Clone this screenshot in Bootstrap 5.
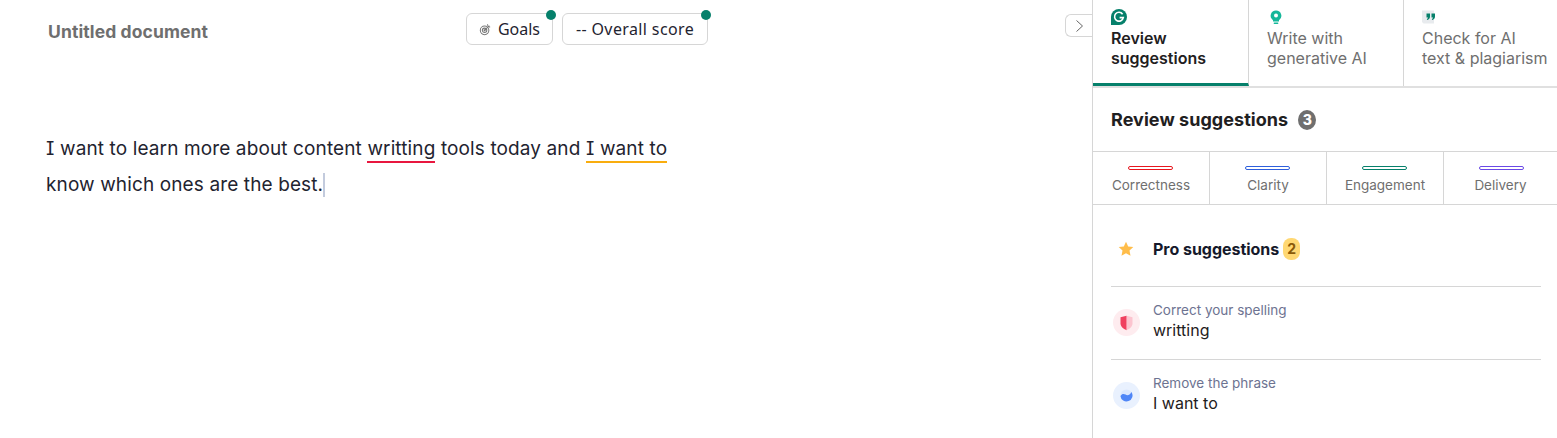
<!DOCTYPE html>
<html lang="en">
<head>
  <meta charset="UTF-8" />
  <title>Untitled document</title>
  <link href="https://cdn.jsdelivr.net/npm/bootstrap@5.3.0/dist/css/bootstrap.min.css" rel="stylesheet"/>
  <style>
    html, body { height: 438px; overflow: hidden; }
    body { font-family: Inter, "Liberation Sans", sans-serif; color: #1f2430; background: #fff; }
    .app-shell { height: 438px; }
    .editor-pane { width: 1092px; position: relative; }
    .editor-top { padding: 13px 0 0 48px; height: 131px; }
    .doc-title { width: 418px; padding-top: 8px; font-size: 17.5px; font-weight: 700; line-height: 21px; color: #6f6f6f; letter-spacing: .1px; }
    .top-pill { position: relative; height: 32px; border: 1px solid #d6d6d6; border-radius: 6px; font-family: "Noto Sans", sans-serif; font-size: 16px; color: #1f2430; background: #fff; }
    .pill-goals { width: 87px; margin-right: 9px; gap: 7px; }
    .pill-score { width: 146px; letter-spacing: .38px; }
    .pill-dot { position: absolute; top: -4px; right: -4px; width: 10px; height: 10px; border-radius: 50%; background: #06806b; }
    .collapse-tab { position: absolute; top: 14px; right: 0; width: 27px; height: 23px; border: 1px solid #d6d6d6; border-right: 0; border-radius: 6px 0 0 6px; background: #fff; }
    .doc-text { padding-left: 46px; width: 690px; font-size: 19px; line-height: 36px; letter-spacing: .12px; color: #1f2430; font-feature-settings: "cv08"; }
    .mark-red { border-bottom: 2px solid #e8173f; padding-bottom: 1px; }
    .mark-yellow { border-bottom: 2px solid #f9ad0e; padding-bottom: 1px; }
    .caret-line { display: inline-block; width: 2px; height: 24px; background: #c3cbdd; vertical-align: -6px; }
    .side-pane { width: 465px; border-left: 1px solid #d6d6d6; }
    .side-tabs { height: 88px; border-bottom: 2px solid #e0e0e0; }
    .side-tab { width: 155px; flex-shrink: 0; padding: 9px 0 0 18px; font-size: 16px; line-height: 20px; color: #6f6f6f; border-right: 1px solid #d6d6d6; }
    .side-tab:first-child { width: 156px; }
    .side-tab:last-child { border-right: 0; width: auto; flex: 1 1 0; white-space: nowrap; overflow: hidden; }
    .side-tab.is-on { color: #1f2021; font-weight: 600; border-bottom: 3px solid #06806b; }
    .tab-ico { display: block; height: 16px; margin-bottom: 3px; }
    .ico-bulb { margin-left: 3px; }
    .side-head { height: 63px; padding-left: 18px; font-size: 18px; font-weight: 700; letter-spacing: .05px; color: #1f2021; }
    .count-grey { width: 18px; height: 20px; margin-left: 10px; border-radius: 50%; background: #6f6f6f; color: #fff; font-size: 14px; font-weight: 800; }
    .cat-row { height: 54px; border-top: 1px solid #d6d6d6; border-bottom: 1px solid #d6d6d6; }
    .cat-item { width: 117px; padding-top: 14px; font-size: 13.5px; line-height: 18px; color: #6f6f6f; border-right: 1px solid #d6d6d6; text-align: center; }
    .cat-item:last-child { border-right: 0; flex: 1 1 0; }
    .cat-bar { display: block; width: 45px; height: 4px; margin: 0 0 6px 35px; border: 1px solid; border-radius: 2px; }
    .sug-list { padding: 0 16px 0 18px; }
    .sug-pro { height: 82px; padding-top: 6px; font-size: 16px; font-weight: 700; letter-spacing: -.03px; color: #15192b; border-bottom: 1px solid #d6d6d6; }
    .sug-slot { width: 42px; }
    .ico-star { margin-left: 7px; }
    .count-yellow { width: 17px; height: 22px; margin-left: 4px; border-radius: 8px; background: #ffd873; color: #8a5a08; font-size: 14px; font-weight: 700; }
    .sug-row { height: 73px; padding-top: 13px; border-bottom: 1px solid #d6d6d6; }
    .sug-row:last-child { border-bottom: 0; }
    .sug-badge { width: 27px; height: 27px; border-radius: 50%; margin: 9px 13px 0 2px; }
    .sug-hint { font-size: 13.5px; line-height: 20px; color: #6d7391; }
    .sug-word { font-size: 16px; line-height: 20px; color: #1f2021; }
  </style>
</head>
<body>
  <div class="app-shell d-flex">
    <div class="editor-pane">
      <div class="editor-top d-flex align-items-start">
        <div class="doc-title">Untitled document</div>
        <div class="top-pill pill-goals d-flex align-items-center justify-content-center">
          <svg width="12" height="13" viewBox="0 0 14 14" fill="none" stroke="#777" stroke-width="1.2"><circle cx="6.500" cy="8" r="5"/><circle cx="6.500" cy="8" r="2.600"/><circle cx="6.500" cy="8" r=".6"/><path d="M6.500 8 12 2.500M10 2.500V1M11.500 4H13"/></svg>
          <span>Goals</span>
          <span class="pill-dot"></span>
        </div>
        <div class="top-pill pill-score d-flex align-items-center justify-content-center">
          <span>-- Overall score</span>
          <span class="pill-dot"></span>
        </div>
      </div>
      <div class="collapse-tab d-flex align-items-center justify-content-center">
        <svg width="9" height="14" viewBox="0 0 9 14" fill="none" stroke="#666" stroke-width="1"><path d="M1.500 1.500 7.500 7l-6 5.500"/></svg>
      </div>
      <div class="doc-text">I want to learn more about content <span class="mark-red">writting</span> tools today and <span class="mark-yellow">I want to</span> know which ones are the best.<span class="caret-line"></span></div>
    </div>

    <div class="side-pane">
      <div class="side-tabs d-flex">
        <div class="side-tab is-on">
          <svg class="tab-ico" width="16" height="16" viewBox="0 0 16 16"><path d="M8 0a8 8 0 0 1 0 16H0V8a8 8 0 0 1 8-8z" fill="#06806b"/><path d="M11.600 5.200A4.400 4.400 0 1 0 12.300 8.600H8.600" fill="none" stroke="#fff" stroke-width="1.600"/></svg>
          Review<br>suggestions
        </div>
        <div class="side-tab">
          <svg class="tab-ico ico-bulb" width="12" height="16" viewBox="0 0 12 16"><path d="M6 1.500a5.300 5.300 0 0 1 3 9.700V12.500H3v-1.300A5.300 5.300 0 0 1 6 1.500z" fill="#15b79a"/><rect x="3.600" y="13.600" width="4.800" height="1.500" rx=".75" fill="#15b79a"/><circle cx="6" cy="6.500" r="2" fill="#fff"/></svg>
          Write with<br>generative AI
        </div>
        <div class="side-tab">
          <svg class="tab-ico" width="15" height="16" viewBox="0 0 15 16"><path d="M0 1.500h12v13H1.500L0 13z" fill="#e8ebee"/><path d="M4.500 4.500h3.500v3c0 1.800-1 3-2.800 3.400l-.4-.9c.8-.3 1.200-.9 1.200-1.600H4.500zM9.500 4.500H13v3c0 1.800-1 3-2.800 3.400l-.4-.9c.8-.3 1.200-.9 1.200-1.600H9.500z" fill="#06806b"/></svg>
          Check for AI<br>text &amp; plagiarism
        </div>
      </div>

      <div class="side-head d-flex align-items-center">
        Review suggestions
        <span class="count-grey d-flex align-items-center justify-content-center">3</span>
      </div>

      <div class="cat-row d-flex">
        <div class="cat-item"><span class="cat-bar" style="border-color:#e8171f"></span>Correctness</div>
        <div class="cat-item"><span class="cat-bar" style="border-color:#2f5fdc"></span>Clarity</div>
        <div class="cat-item"><span class="cat-bar" style="border-color:#06806b"></span>Engagement</div>
        <div class="cat-item"><span class="cat-bar" style="border-color:#6a4ae6"></span>Delivery</div>
      </div>

      <div class="sug-list">
        <div class="sug-pro d-flex align-items-center">
          <span class="sug-slot d-flex">
            <svg class="ico-star" width="16" height="16" viewBox="0 0 16 16"><path d="M8 .8l2.200 4.700 5.100.6-3.800 3.500 1 5.100L8 12.200 3.500 14.700l1-5.100L.7 6.100l5.100-.6z" fill="#ffbd4a"/></svg>
          </span>
          Pro suggestions
          <span class="count-yellow d-flex align-items-center justify-content-center">2</span>
        </div>
        <div class="sug-row d-flex align-items-start">
          <span class="sug-badge d-flex align-items-center justify-content-center" style="background:#feecef">
            <svg width="13" height="16" viewBox="0 0 13 16"><path d="M6.500 .8 12.500 2.300v6c0 3.200-2.600 5.500-6 6.900z" fill="#fcc4cf"/><path d="M6.500 .8 .5 2.300v6c0 3.200 2.600 5.500 6 6.900z" fill="#f0405f"/></svg>
          </span>
          <div><div class="sug-hint">Correct your spelling</div><div class="sug-word">writting</div></div>
        </div>
        <div class="sug-row d-flex align-items-start">
          <span class="sug-badge d-flex align-items-center justify-content-center" style="background:#e9f1fe">
            <svg width="13" height="13" viewBox="0 0 14 14"><circle cx="7" cy="7" r="6.500" fill="#dbe7fe"/><path d="M.5 7.500C2 5 4 4.800 6 6s4.500.8 6.300-2.800A6.500 6.500 0 1 1 .5 7.500z" fill="#4f86f7"/></svg>
          </span>
          <div><div class="sug-hint">Remove the phrase</div><div class="sug-word">I want to</div></div>
        </div>
      </div>
    </div>
  </div>
  <script src="https://cdn.jsdelivr.net/npm/bootstrap@5.3.0/dist/js/bootstrap.bundle.min.js"></script>
</body>
</html>
